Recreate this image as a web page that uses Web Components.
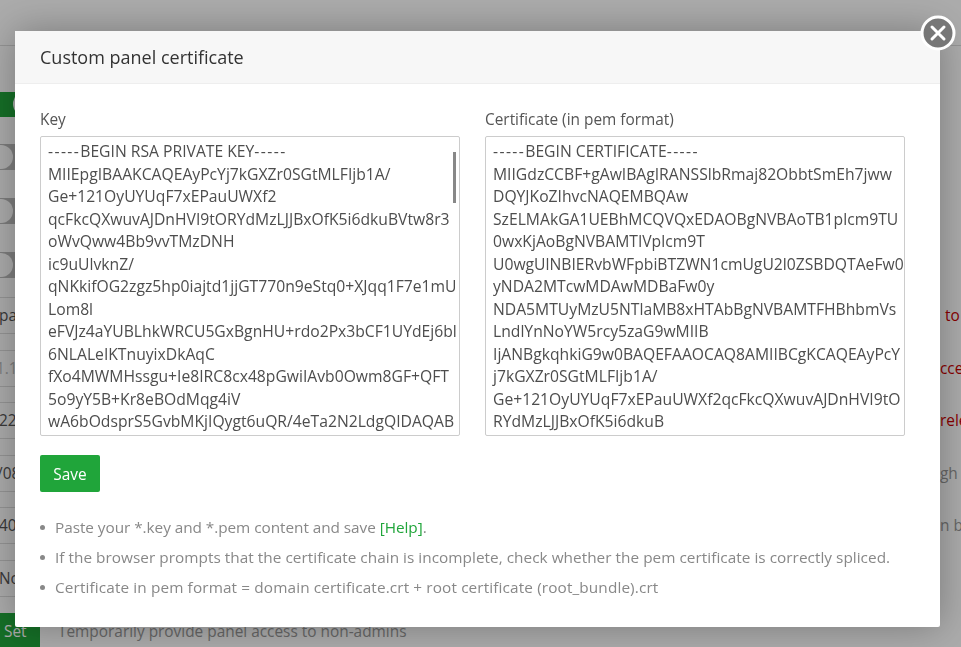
<!DOCTYPE html>
<html>
<head>
<meta charset="utf-8">
<title>Custom panel certificate</title>
<style>
  html,body{margin:0;padding:0;height:100%;overflow:hidden;background:#fff;}
  body{font-family:"Open Sans","Noto Sans",sans-serif;font-size:15.4px;color:#555;}
  .dash{letter-spacing:1.4px;}
</style>
</head>
<body>

<settings-page>
  <panel-switch on></panel-switch>
  <panel-switch></panel-switch>
  <panel-switch></panel-switch>
  <panel-switch last></panel-switch>
  <panel-field left="pa" right="to" shift="-1" tone="red"></panel-field>
  <panel-field left="1.1" right="cces" shift="-4" tone="red" faint></panel-field>
  <panel-field left="22" right="rele" shift="-1" tone="red"></panel-field>
  <panel-field left="/08" right="gh t" shift="-3"></panel-field>
  <panel-field left="40" right="n b" shift="-1"></panel-field>
  <panel-field left="No" right="" shift="-1"></panel-field>
  <panel-action label="Set">Temporarily provide panel access to non-admins</panel-action>
</settings-page>

<layer-dialog heading="Custom panel certificate">
  <cert-box label="Key" scrollbar><span class="dash">-----</span>BEGIN RSA PRIVATE KEY<span class="dash">-----</span>
MIIEpgIBAAKCAQEAyPcYj7kGXZr0SGtMLFIjb1A/
Ge+121OyUYUqF7xEPauUWXf2
qcFkcQXwuvAJDnHVI9tORYdMzLJJBxOfK5i6dkuBVtw8r3
oWvQww4Bb9vvTMzDNH
ic9uUlvknZ/
qNKkifOG2zgz5hp0iajtd1jjGT770n9eStq0+XJqq1F7e1mU
Lom8l
eFVJz4aYUBLhkWRCU5GxBgnHU+rdo2Px3bCF1UYdEj6bl
6NLALeIKTnuyixDkAqC
fXo4MWMHssgu+Ie8IRC8cx48pGwiIAvb0Owm8GF+QFT
5o9yY5B+Kr8eBOdMqg4iV
wA6bOdsprS5GvbMKjIQygt6uQR/4eTa2N2LdgQIDAQAB</cert-box>
  <cert-box label="Certificate (in pem format)"><span class="dash">-----</span>BEGIN CERTIFICATE<span class="dash">-----</span>
MIIGdzCCBF+gAwIBAgIRANSSlbRmaj82ObbtSmEh7jww
DQYJKoZIhvcNAQEMBQAw
SzELMAkGA1UEBhMCQVQxEDAOBgNVBAoTB1plcm9TU
0wxKjAoBgNVBAMTIVplcm9T
U0wgUlNBIERvbWFpbiBTZWN1cmUgU2l0ZSBDQTAeFw0
yNDA2MTcwMDAwMDBaFw0y
NDA5MTUyMzU5NTlaMB8xHTAbBgNVBAMTFHBhbmVs
LndlYnNoYW5rcy5zaG9wMIIB
IjANBgkqhkiG9w0BAQEFAAOCAQ8AMIIBCgKCAQEAyPcY
j7kGXZr0SGtMLFIjb1A/
Ge+121OyUYUqF7xEPauUWXf2qcFkcQXwuvAJDnHVI9tO
RYdMzLJJBxOfK5i6dkuB</cert-box>
  <save-button slot="action">Save</save-button>
  <li slot="note" style="letter-spacing:-.05px">Paste your *.key and *.pem content and save <a href="#">[Help]</a>.</li>
  <li slot="note" style="letter-spacing:.03px">If the browser prompts that the certificate chain is incomplete, check whether the pem certificate is correctly spliced.</li>
  <li slot="note" style="letter-spacing:.12px">Certificate in pem format = domain certificate.crt + root certificate (root_bundle).crt</li>
</layer-dialog>

<script>
//the settings page that sits dimmed behind the dialog
class SettingsPage extends HTMLElement{
  constructor(){
    super();
    this.attachShadow({mode:'open'});
    this.shadowRoot.innerHTML=`<style>
      :host{display:flex;flex-direction:column;height:647px;overflow:hidden;}
      .rule{height:1px;background:#ddd;margin:45px 0 46px;flex:none;}
    </style>
    <div class="rule"></div>
    <slot></slot>`;
  }
}
customElements.define('settings-page',SettingsPage);

class PanelSwitch extends HTMLElement{
  constructor(){
    super();
    this.attachShadow({mode:'open'});
    this.shadowRoot.innerHTML=`<style>
      :host{display:block;width:100px;height:26px;margin-bottom:28px;background:#bbb;overflow:hidden;flex:none;}
      :host([on]){background:#20a53a;height:25px;margin-bottom:27px;}
      :host([last]){margin-bottom:19px;}
      i{display:block;width:24px;height:24px;margin:1px 0 0 -11px;border-radius:50%;background:#fff;}
      :host([on]) i{margin:0 0 0 13px;}
    </style><i></i>`;
  }
}
customElements.define('panel-switch',PanelSwitch);

class PanelField extends HTMLElement{
  constructor(){
    super();
    this.attachShadow({mode:'open'});
    this.shadowRoot.innerHTML=`<style>
      :host{display:flex;justify-content:space-between;align-items:stretch;height:37px;margin-bottom:15.5px;flex:none;white-space:nowrap;}
      .l{box-sizing:border-box;width:100px;line-height:36px;border-top:1px solid #ddd;border-bottom:1px solid #ddd;color:#555;overflow:hidden;}
      :host([faint]) .l{color:#bbb;}
      .r{width:21px;line-height:38px;overflow:hidden;color:#999;}
      :host([tone=red]) .r{color:#c00;}
      .r span{display:inline-block;}
    </style><div class="l"></div><div class="r"><span></span></div>`;
  }
  connectedCallback(){
    let l=this.shadowRoot.querySelector('.l');
    let r=this.shadowRoot.querySelector('.r span');
    l.textContent=this.getAttribute('left');
    l.style.textIndent=this.getAttribute('shift')+'px';
    r.textContent=this.getAttribute('right');
    r.style.marginLeft=this.getAttribute('right')=='to'?'5px':'0';
  }
}
customElements.define('panel-field',PanelField);

class PanelAction extends HTMLElement{
  constructor(){
    super();
    this.attachShadow({mode:'open'});
    this.shadowRoot.innerHTML=`<style>
      :host{display:flex;height:35px;line-height:37px;flex:none;margin-top:1px;color:#999;}
      b{font-weight:400;width:40px;box-sizing:border-box;padding-left:4px;background:#20a53a;color:#fff;flex:none;}
      span{margin-left:18px;}
    </style><b></b><span><slot></slot></span>`;
  }
  connectedCallback(){
    this.shadowRoot.querySelector('b').textContent=this.getAttribute('label');
  }
}
customElements.define('panel-action',PanelAction);

class SaveButton extends HTMLElement{
  constructor(){
    super();
    this.attachShadow({mode:'open'});
    this.shadowRoot.innerHTML=`<style>
      :host{display:block;width:60px;height:37px;line-height:39px;text-align:center;background:#20a53a;color:#fff;border-radius:2px;}
    </style><slot></slot>`;
  }
}
customElements.define('save-button',SaveButton);

class CertBox extends HTMLElement{
  constructor(){
    super();
    this.attachShadow({mode:'open'});
    this.shadowRoot.innerHTML=`<style>
      :host{display:block;width:420px;flex:none;}
      label{display:block;height:27px;line-height:22px;margin-top:-2px;color:#555;}
      .box{position:relative;box-sizing:border-box;height:300px;border:1px solid #ccc;border-radius:2px;padding:3px 0 0 7px;overflow:hidden;white-space:pre;line-height:22.5px;color:#4d4d4d;font-size:15.7px;}
      .bar{display:none;position:absolute;top:15px;right:3px;width:3px;height:51px;background:#888;}
      :host([scrollbar]) .bar{display:block;}
    </style>
    <label></label>
    <div class="box"><slot></slot><span class="bar"></span></div>`;
  }
  connectedCallback(){
    this.shadowRoot.querySelector('label').textContent=this.getAttribute('label');
  }
}
customElements.define('cert-box',CertBox);

class LayerDialog extends HTMLElement{
  constructor(){
    super();
    this.attachShadow({mode:'open'});
    this.shadowRoot.innerHTML=`<style>
      :host{position:fixed;inset:0;display:block;background:rgba(0,0,0,.33);}
      .win{position:absolute;left:15px;top:31px;width:925px;height:596px;background:#fff;border-radius:2px;box-shadow:0 0 38px rgba(0,0,0,.3);}
      header{box-sizing:border-box;height:53px;line-height:52px;padding-left:25px;background:#f7f7f7;border-bottom:1px solid #eee;font-size:18px;color:#333;}
      .body{padding:27px 25px 0;}
      .cols{display:flex;gap:25px;}
      .act{margin-top:19px;}
      ul{list-style:none;margin:20px 0 0;padding:0;}
      ::slotted(li){position:relative;padding-left:15px;font-size:15.35px;line-height:30.2px;color:#888;white-space:nowrap;}
      .x{position:absolute;left:905px;top:-16px;width:36px;height:36px;filter:blur(.35px);}
    </style>
    <div class="win">
      <header></header>
      <div class="body">
        <div class="cols"><slot></slot></div>
        <div class="act"><slot name="action"></slot></div>
        <ul><slot name="note"></slot></ul>
      </div>
      <svg class="x" viewBox="0 0 36 36">
        <circle cx="18" cy="18" r="16" fill="#777" stroke="#fff" stroke-width="3"/>
        <path d="M12 12L24 24M24 12L12 24" stroke="#fff" stroke-width="3" stroke-linecap="round"/>
      </svg>
    </div>`;
  }
  connectedCallback(){
    this.shadowRoot.querySelector('header').textContent=this.getAttribute('heading');
    this.querySelectorAll('li').forEach(li=>{
      let dot=document.createElement('span');
      dot.style.cssText='position:absolute;left:0;top:13px;width:5px;height:5px;border-radius:50%;background:#888;';
      li.prepend(dot);
      let a=li.querySelector('a');
      if(a)a.style.cssText='color:#20a53a;text-decoration:none;';
    });
  }
}
customElements.define('layer-dialog',LayerDialog);
</script>
</body>
</html>
